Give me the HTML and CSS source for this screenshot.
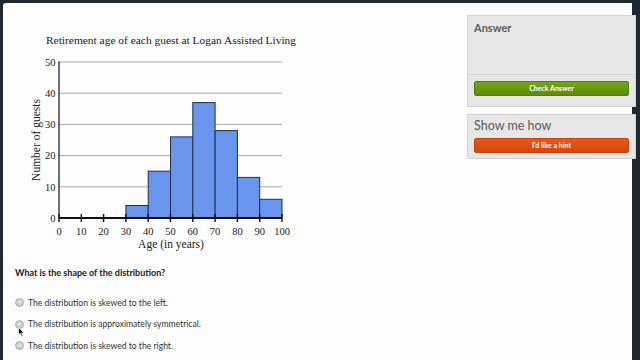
FILE: index.html
```html
<!DOCTYPE html>
<html>
<head>
<meta charset="utf-8">
<link rel="stylesheet" href="styles.css">
</head>
<body>
<div class="page">
  <div class="main">
    <svg class="chart" width="300" height="252" viewBox="3 3 300 252" xmlns="http://www.w3.org/2000/svg">
      <text x="171" y="44" class="title" text-anchor="middle" textLength="250" lengthAdjust="spacingAndGlyphs">Retirement age of each guest at Logan Assisted Living</text>
      <g class="grid">
        <line x1="59" y1="62" x2="282" y2="62"/>
        <line x1="59" y1="93.2" x2="282" y2="93.2"/>
        <line x1="59" y1="124.4" x2="282" y2="124.4"/>
        <line x1="59" y1="155.6" x2="282" y2="155.6"/>
        <line x1="59" y1="186.8" x2="282" y2="186.8"/>
      </g>
      <g class="ylab" text-anchor="end">
        <text x="55.5" y="66">50</text>
        <text x="55.5" y="97">40</text>
        <text x="55.5" y="128">30</text>
        <text x="55.5" y="159">20</text>
        <text x="55.5" y="191">10</text>
        <text x="55.5" y="222">0</text>
      </g>
      <g class="bars">
        <rect x="125.9" y="205.5" width="22.3" height="12.5"/>
        <rect x="148.2" y="171.2" width="22.3" height="46.8"/>
        <rect x="170.5" y="136.9" width="22.3" height="81.1"/>
        <rect x="192.8" y="102.6" width="22.3" height="115.4"/>
        <rect x="215.1" y="130.6" width="22.3" height="87.4"/>
        <rect x="237.4" y="177.4" width="22.3" height="40.6"/>
        <rect x="259.7" y="199.3" width="22.3" height="18.7"/>
      </g>
      <line class="axis" x1="59" y1="61.5" x2="59" y2="218"/>
      <line class="axis xaxis" x1="59" y1="218" x2="282" y2="218"/>
      <g class="ticks">
        <line x1="59" y1="214" x2="59" y2="222"/>
        <line x1="81.3" y1="214" x2="81.3" y2="222"/>
        <line x1="103.6" y1="214" x2="103.6" y2="222"/>
        <line x1="125.9" y1="214" x2="125.9" y2="222"/>
        <line x1="148.2" y1="214" x2="148.2" y2="222"/>
        <line x1="170.5" y1="214" x2="170.5" y2="222"/>
        <line x1="192.8" y1="214" x2="192.8" y2="222"/>
        <line x1="215.1" y1="214" x2="215.1" y2="222"/>
        <line x1="237.4" y1="214" x2="237.4" y2="222"/>
        <line x1="259.7" y1="214" x2="259.7" y2="222"/>
        <line x1="282" y1="214" x2="282" y2="222"/>
      </g>
      <g class="xlab" text-anchor="middle">
        <text x="59" y="235">0</text>
        <text x="81.3" y="235">10</text>
        <text x="103.6" y="235">20</text>
        <text x="125.9" y="235">30</text>
        <text x="148.2" y="235">40</text>
        <text x="170.5" y="235">50</text>
        <text x="192.8" y="235">60</text>
        <text x="215.1" y="235">70</text>
        <text x="237.4" y="235">80</text>
        <text x="259.7" y="235">90</text>
        <text x="282" y="235">100</text>
      </g>
      <text class="axtitle" x="171" y="248" text-anchor="middle">Age (in years)</text>
      <text class="axtitle" x="0" y="0" text-anchor="middle" transform="translate(40 140) rotate(-90)">Number of guests</text>
    </svg>
    <p class="question">What is the shape of the distribution?</p>
    <ul class="options">
      <li class="option"><span class="radio"></span>The distribution is skewed to the left.</li>
      <li class="option"><span class="radio"></span>The distribution is approximately symmetrical.</li>
      <li class="option"><span class="radio"></span>The distribution is skewed to the right.</li>
    </ul>
  </div>
  <div class="side">
    <div class="panel answer">
      <div class="panel-title">Answer</div>
      <div class="answer-space"></div>
      <div class="panel-foot"><div class="btn btn-green">Check Answer</div></div>
    </div>
    <div class="panel hint">
      <div class="panel-title big">Show me how</div>
      <div class="btn btn-red">I'd like a hint</div>
    </div>
  </div>
  <svg class="cursor" width="7" height="10" viewBox="0 0 7 10" xmlns="http://www.w3.org/2000/svg"><path d="M0.5 0.5 L0.5 8 L2.3 6.3 L3.6 9.3 L4.8 8.8 L3.6 5.9 L6 5.9 Z" fill="#000" stroke="#fff" stroke-width="0.7"/></svg>
</div>
</body>
</html>
```

FILE: styles.css
```css
html, body {
  margin: 0;
  padding: 0;
}
body {
  background: #1d2831;
  width: 640px;
  height: 360px;
  overflow: hidden;
}
.page {
  position: relative;
  margin: 3px 0 0 3px;
  width: 629px;
  height: 357px;
  background: #fdfdfd;
  display: flex;
  border-top-left-radius: 3px;
}
.main {
  width: 464px;
  flex: none;
}
.chart {
  display: block;
}
.chart text {
  font-family: "Liberation Serif", "DejaVu Serif", serif;
  fill: #222;
}
.chart .title {
  font-size: 11px;
}
.grid line {
  stroke: #a9a9a9;
  stroke-width: 1;
}
.ylab text, .xlab text {
  font-size: 10.5px;
}
.axtitle {
  font-size: 11.5px;
}
.bars rect {
  fill: #6a95ec;
  stroke: #1e3050;
  stroke-width: 1;
}
.axis {
  stroke: #111;
  stroke-width: 1.2;
}
.xaxis {
  stroke-width: 1.8;
}
.ticks line {
  stroke: #111;
  stroke-width: 1.4;
}
.question {
  margin: 12px 0 0 12px;
  font-family: "Lato", "Liberation Sans", sans-serif;
  font-weight: 700;
  font-size: 9px;
  line-height: 12px;
  color: #222;
}
.options {
  list-style: none;
  margin: 13px 0 0 12px;
  padding: 0;
}
.option {
  display: flex;
  align-items: center;
  height: 21.5px;
  font-family: "Lato", "Liberation Sans", sans-serif;
  font-size: 8.6px;
  color: #333;
}
.radio {
  width: 7px;
  height: 7px;
  border-radius: 50%;
  background: radial-gradient(circle at 50% 40%, #e4e4e4, #b9b9b9);
  border: 1px solid #aaa;
  margin: 0 4px 0 0;
  flex: none;
}
.side {
  flex: none;
  width: 169px;
  margin-top: 12px;
  display: flex;
  flex-direction: column;
  gap: 7px;
}
.panel {
  background: #e7e7e7;
  border: 1px solid #d2d2d2;
  box-sizing: border-box;
  font-family: "Lato", "Liberation Sans", sans-serif;
}
.answer {
  height: 92px;
  display: flex;
  flex-direction: column;
}
.panel-title {
  color: #5a5a5a;
  font-weight: 700;
  font-size: 11px;
  line-height: 14px;
  padding: 5px 0 0 6px;
}
.panel-title.big {
  font-weight: 400;
  font-size: 12.5px;
  padding: 4px 0 0 6px;
}
.answer-space {
  flex: 1;
}
.panel-foot {
  border-top: 1px solid #d6d6d6;
  height: 32px;
  box-sizing: border-box;
  padding: 6px 6px 0 6px;
}
.btn {
  height: 15px;
  border-radius: 2px;
  color: #fff;
  font-size: 7px;
  font-weight: 700;
  line-height: 15px;
  text-align: center;
  box-sizing: border-box;
}
.btn-green {
  background: linear-gradient(#76a51a, #5c8b0a);
  border: 1px solid #527d07;
  line-height: 13px;
}
.hint {
  height: 45px;
}
.btn-red {
  margin: 5px 6px 0 6px;
  background: linear-gradient(#e45a16, #d5480b);
  border: 1px solid #c64209;
  line-height: 13px;
}
.cursor {
  position: absolute;
  left: 15px;
  top: 324px;
}
```
